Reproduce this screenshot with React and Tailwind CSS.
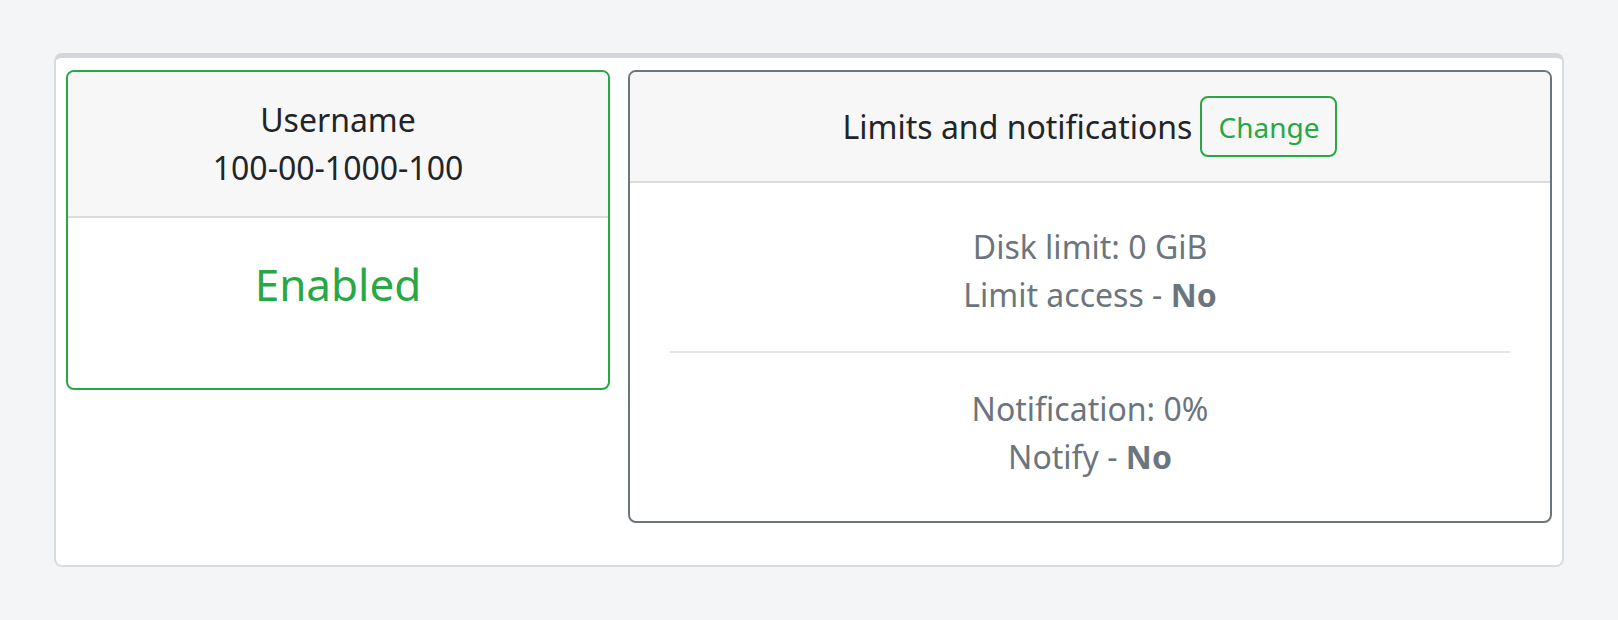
export default function App() {
  return (
    <div
      className="min-h-[620px] bg-[#f4f5f7] px-[54px] pt-[53px]"
      style={{ fontFamily: '"Noto Sans", "Open Sans", sans-serif' }}
    >
      <div className="rounded-lg border-2 border-t-[5px] border-[#d8dce1] border-t-[#d3d6da] bg-white px-[10px] pt-[12px] pb-[42px]">
        <div className="flex items-start gap-[18px]">
          {/* Status card */}
          <div className="w-[544px] shrink-0 overflow-hidden rounded-lg border-2 border-[#28a745] bg-white text-center">
            <div className="border-b-2 border-[#dcdcdc] bg-[#f7f7f7] px-10 py-6 text-[32px] leading-[48px] text-[#212529]">
              <div>Username</div>
              <div>100-00-1000-100</div>
            </div>
            <div className="px-10 pt-10 pb-[77px]">
              <div className="text-[44px] leading-[1.2] text-[#28a745]">Enabled</div>
            </div>
          </div>

          {/* Limits card */}
          <div className="flex-1 overflow-hidden rounded-lg border-2 border-[#6c757d] bg-white text-center">
            <div className="flex items-center justify-center gap-2 border-b-2 border-[#dcdcdc] bg-[#f7f7f7] px-10 py-6">
              <span className="text-[32px] leading-[48px] text-[#212529]">Limits and notifications</span>
              <button className="h-[61px] rounded-lg border-2 border-[#28a745] bg-transparent px-4 text-[28px] leading-[42px] text-[#28a745]">
                Change
              </button>
            </div>
            <div className="px-10 py-10 text-[32px] leading-[48px] text-[#6c757d]">
              <div>
                <div>Disk limit: 0 GiB</div>
                <div>
                  Limit access - <span className="font-bold">No</span>
                </div>
              </div>
              <div className="my-8 h-[2px] bg-[#e5e5e5]" />
              <div>
                <div>Notification: 0%</div>
                <div>
                  Notify - <span className="font-bold">No</span>
                </div>
              </div>
            </div>
          </div>
        </div>
      </div>
    </div>
  );
}
